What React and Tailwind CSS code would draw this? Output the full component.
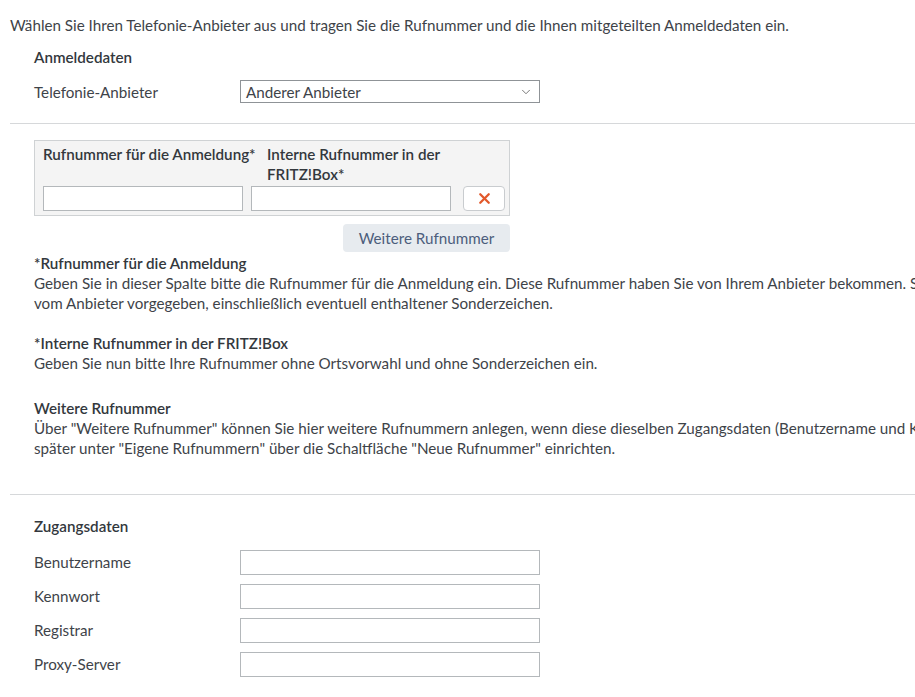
import React from "react";
import { ChevronDown, X } from "lucide-react";

const font = { fontFamily: "'Source Sans Pro', Lato, 'Liberation Sans', sans-serif" };

function FieldRow({ label, children }) {
  return (
    <div className="flex items-center h-[34px]">
      <span className="w-[206px] shrink-0">{label}</span>
      {children}
    </div>
  );
}

function TextInput({ className = "" }) {
  return (
    <input
      type="text"
      className={`h-[25px] shrink-0 border border-[#b4b8bb] bg-white outline-none px-1 ${className}`}
    />
  );
}

export default function App() {
  return (
    <div
      className="w-[915px] h-[697px] overflow-hidden bg-white text-[15.2px] leading-[20px] text-[#3e4349] whitespace-nowrap"
      style={font}
    >
      <p className="pl-[10px] pt-[15px]">
        Wählen Sie Ihren Telefonie-Anbieter aus und tragen Sie die Rufnummer und die Ihnen mitgeteilten Anmeldedaten ein.
      </p>

      <div className="pl-[34px] pt-[12px]">
        <h2 className="font-semibold text-[#33383d]">Anmeldedaten</h2>
        <div className="flex items-center mt-[13px]">
          <span className="w-[206px] shrink-0">Telefonie-Anbieter</span>
          <div className="w-[300px] h-[23px] border border-[#8f9397] flex items-center justify-between pl-[5px] pr-[6px]">
            <span>Anderer Anbieter</span>
            <ChevronDown className="w-[14px] h-[14px] text-[#666]" strokeWidth={1.5} />
          </div>
        </div>
      </div>

      <div className="ml-[10px] mt-[20px] border-t border-[#d6d8da]" />

      <div className="pl-[34px] pt-[16px]">
        <div className="w-[476px] border border-[#cfd2d4] bg-[#f4f4f4] pl-[8px] pr-[4px] pt-[3px] pb-[4px]">
          <div className="flex font-semibold text-[#33383d]">
            <span className="w-[224px] shrink-0">Rufnummer für die Anmeldung*</span>
            <span className="whitespace-normal w-[200px]">Interne Rufnummer in der FRITZ!Box*</span>
          </div>
          <div className="flex items-center gap-[8px] mt-[2px]">
            <TextInput className="w-[200px]" />
            <TextInput className="w-[200px]" />
            <button className="ml-[4px] shrink-0 w-[42px] h-[25px] rounded-[4px] border border-[#c9cccf] bg-white flex items-center justify-center">
              <X className="w-[17px] h-[17px] text-[#e2582a]" strokeWidth={3.2} />
            </button>
          </div>
        </div>
        <div className="w-[476px] flex justify-end mt-[8px]">
          <button className="w-[167px] h-[28px] rounded-[4px] bg-[#e7ebef] text-[#4c5d7c]">
            Weitere Rufnummer
          </button>
        </div>

        <div className="mt-[1px]">
          <h3 className="font-semibold text-[#33383d]">*Rufnummer für die Anmeldung</h3>
          <p>
            Geben Sie in dieser Spalte bitte die Rufnummer für die Anmeldung ein. Diese Rufnummer haben Sie von Ihrem Anbieter bekommen. Schreiben Sie die Rufnummer wie
          </p>
          <p>vom Anbieter vorgegeben, einschließlich eventuell enthaltener Sonderzeichen.</p>
        </div>

        <div className="mt-[20px]">
          <h3 className="font-semibold text-[#33383d]">*Interne Rufnummer in der FRITZ!Box</h3>
          <p>Geben Sie nun bitte Ihre Rufnummer ohne Ortsvorwahl und ohne Sonderzeichen ein.</p>
        </div>

        <div className="mt-[25px]">
          <h3 className="font-semibold text-[#33383d]">Weitere Rufnummer</h3>
          <p>
            Über "Weitere Rufnummer" können Sie hier weitere Rufnummern anlegen, wenn diese dieselben Zugangsdaten (Benutzername und Kennwort) verwenden. Andere Rufnummern können Sie
          </p>
          <p>später unter "Eigene Rufnummern" über die Schaltfläche "Neue Rufnummer" einrichten.</p>
        </div>
      </div>

      <div className="ml-[10px] mt-[36px] border-t border-[#d6d8da]" />

      <div className="pl-[34px] pt-[21px]">
        <h2 className="font-semibold text-[#33383d]">Zugangsdaten</h2>
        <div className="mt-[9px]">
          <FieldRow label="Benutzername">
            <TextInput className="w-[300px]" />
          </FieldRow>
          <FieldRow label="Kennwort">
            <TextInput className="w-[300px]" />
          </FieldRow>
          <FieldRow label="Registrar">
            <TextInput className="w-[300px]" />
          </FieldRow>
          <FieldRow label="Proxy-Server">
            <TextInput className="w-[300px]" />
          </FieldRow>
        </div>
      </div>
    </div>
  );
}
